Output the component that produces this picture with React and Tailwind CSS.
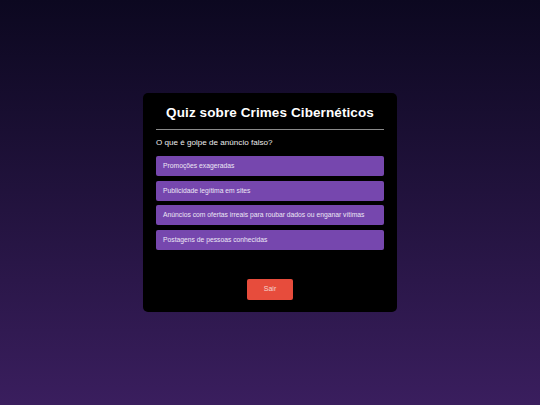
export default function App() {
  const options = [
    "Promoções exageradas",
    "Publicidade legítima em sites",
    "Anúncios com ofertas irreais para roubar dados ou enganar vítimas",
    "Postagens de pessoas conhecidas",
  ];
  return (
    <div
      className="w-[540px] h-[405px] flex items-center justify-center bg-gradient-to-b from-[#0c0820] to-[#3a1e5e]"
      style={{ fontFamily: '"Liberation Sans", Arial, sans-serif' }}
    >
      <div className="w-[254px] h-[219px] bg-black rounded-[5px] px-[13px] pt-[10px] flex flex-col">
        <h1 className="text-white font-bold text-[13.5px] leading-[20px] text-center whitespace-nowrap tracking-[0.1px]">
          Quiz sobre Crimes Cibernéticos
        </h1>
        <div className="h-px bg-[#8a8a8a] mt-[6px]" />
        <p className="text-[#ececec] text-[8.1px] leading-[12px] mt-[7px]">O que é golpe de anúncio falso?</p>
        <div className="flex flex-col gap-[4.6px] mt-[7px]">
          {options.map((o) => (
            <div
              key={o}
              className="h-[20px] bg-[#7647ae] rounded-[2px] px-[7px] flex items-center text-[#ece6f5] text-[6.75px]"
            >
              {o}
            </div>
          ))}
        </div>
        <div className="flex justify-center mt-[29px]">
          <div className="w-[46px] h-[21px] bg-[#e74c3c] rounded-[2px] flex items-center justify-center text-[#f5d5d0] text-[7px]">
            Sair
          </div>
        </div>
      </div>
    </div>
  );
}
